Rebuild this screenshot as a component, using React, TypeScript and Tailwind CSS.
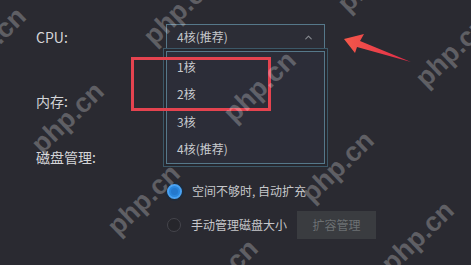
import { ChevronUp } from "lucide-react";

const cpuOptions = ["1核", "2核", "3核", "4核(推荐)"];

// watermark centres, diagonal tiles
const marks = [
  "left-[180px] top-[10px]",
  "left-[260px] top-[87px]",
  "left-[338px] top-[167px]",
  "left-[418px] top-[237px]",
  "left-[374px] top-[-23px]",
  "left-[452px] top-[52px]",
  "left-[-10px] top-[43px]",
  "left-[68px] top-[118px]",
  "left-[144px] top-[200px]",
  "left-[222px] top-[275px]",
];

function CpuSelect() {
  return (
    <div className="relative w-[159px]">
      <div className="flex h-[26px] items-center justify-between border border-[#56788a] bg-[#2c2d36] pl-[10px] pr-[10px] text-[12px] text-[#c4c6ca]">
        <span>4核(推荐)</span>
        <ChevronUp className="h-[11px] w-[11px] text-[#85888e]" strokeWidth={2.5} />
      </div>
      <ul className="absolute left-0 top-[27px] z-10 w-full border border-[#56788a] bg-[#2c2d38] pt-[1px] shadow-[0_0_0_2px_#26272e,0_0_0_3px_#3c5868]">
        {cpuOptions.map((opt) => (
          <li key={opt} className="flex h-[27.5px] items-center pl-[10px] text-[12px] text-[#c8cace]">
            {opt}
          </li>
        ))}
      </ul>
    </div>
  );
}

function Radio({ checked, children }: { checked?: boolean; children: React.ReactNode }) {
  return (
    <label className="flex items-center">
      {checked ? (
        <span className="flex h-[15px] w-[15px] items-center justify-center rounded-full border-2 border-[#4aa2f2] bg-[#2a86dc] shadow-[0_0_0_2px_#1f2b3a]">
          <span className="h-[7px] w-[7px] rounded-full bg-[#2478cc]" />
        </span>
      ) : (
        <span className="h-[14px] w-[14px] rounded-full border border-[#45454c] bg-[#26262b]" />
      )}
      <span className="ml-[10px] text-[12px] text-[#c6c7ca]">{children}</span>
    </label>
  );
}

export default function App() {
  return (
    <div
      className="relative h-[265px] w-[471px] overflow-hidden bg-[#2a2a31]"
      style={{ fontFamily: '"Noto Sans CJK SC", "Noto Sans", sans-serif' }}
    >
      <div className="pl-[36px] pt-[24px] text-[14px] text-[#d4d5d8]">
        <div className="grid grid-cols-[130px_1fr] items-center">
          <span>CPU:</span>
          <CpuSelect />
        </div>
        <div className="mt-[38px] grid h-[26px] grid-cols-[130px_1fr] items-center">
          <span>内存:</span>
        </div>
        <div className="mt-[30px] grid h-[26px] grid-cols-[130px_1fr] items-center">
          <span>磁盘管理:</span>
        </div>
        <div className="ml-[131px] mt-[7px] flex flex-col">
          <div className="flex h-[28px] items-center">
            <Radio checked>空间不够时, 自动扩充</Radio>
          </div>
          <div className="mt-[6px] flex h-[28px] items-center">
            <Radio>手动管理磁盘大小</Radio>
            <button className="ml-[10px] h-[28px] w-[79px] bg-[#3a3c40] text-[12px] text-[#6c7073]">扩容管理</button>
          </div>
        </div>
      </div>

      {/* annotation: red box around options */}
      <div className="absolute left-[131px] top-[57px] z-20 h-[54px] w-[140px] border-[3px] border-[#e4434f]" />

      {/* annotation: red arrow */}
      <svg className="absolute left-0 top-0 z-20" width="471" height="265" viewBox="0 0 471 265">
        <defs>
          <linearGradient id="arrow" x1="0" y1="0" x2="1" y2="0">
            <stop offset="0" stopColor="#f5584a" />
            <stop offset="1" stopColor="#e02a48" />
          </linearGradient>
        </defs>
        <polygon points="344,39 364,34 360,41 411,62 357,47 355,53" fill="url(#arrow)" />
      </svg>

      {marks.map((pos) => (
        <span
          key={pos}
          className={`pointer-events-none absolute z-30 -translate-x-1/2 -translate-y-1/2 rotate-[-44deg] whitespace-nowrap text-[27px] font-bold leading-none text-white/25 ${pos}`}
          style={{ fontFamily: '"Liberation Sans", Arial, sans-serif' }}
        >
          php.cn
        </span>
      ))}
    </div>
  );
}
